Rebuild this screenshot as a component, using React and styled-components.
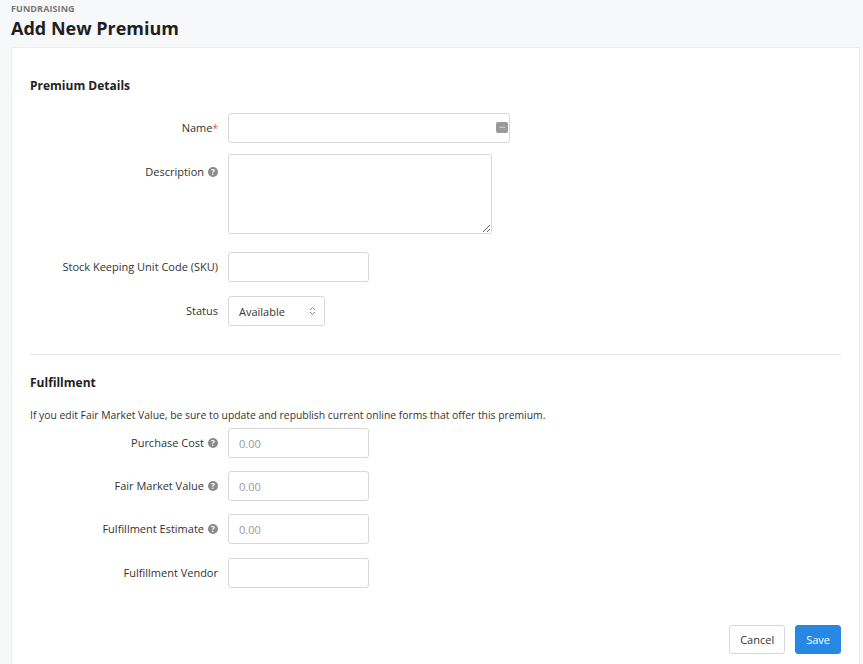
import React from "react";
import styled, { createGlobalStyle } from "styled-components";

const GlobalStyle = createGlobalStyle`
  body {
    margin: 0;
    background: #f7f8fa;
    font-family: "Open Sans", "Liberation Sans", sans-serif;
    color: #333;
  }
`;

const Page = styled.div`
  padding: 2px 0 0 11px;
  height: 662px;
  overflow: hidden;
`;

const Crumb = styled.div`
  font-size: 9px;
  font-weight: 700;
  color: #777;
  letter-spacing: 0.1px;
`;

const Title = styled.h1`
  margin: 0;
  font-size: 18px;
  line-height: 26px;
  font-weight: 700;
  color: #1f1f1f;
`;

const Card = styled.div`
  margin-top: 6px;
  margin-right: 3px;
  background: #fff;
  border: 1px solid #eceef1;
  padding: 29px 18px 20px 18px;
  min-height: 600px;
`;

const SectionTitle = styled.h2`
  margin: 0 0 ${(p) => p.$mb}px;
  font-size: 12px;
  font-weight: 700;
  color: #222;
`;

const Row = styled.div`
  display: flex;
  align-items: flex-start;
  margin-bottom: ${(p) => p.$mb}px;
`;

const Label = styled.label`
  width: 198px;
  padding-right: 10px;
  box-sizing: border-box;
  display: flex;
  justify-content: flex-end;
  align-items: center;
  gap: 4px;
  font-size: 11px;
  line-height: 14px;
  padding-top: ${(p) => p.$pt ?? 8}px;
  color: #333;
`;

const Req = styled.span`
  color: #d9534f;
  margin-left: -4px;
  align-self: flex-start;
  font-size: 10px;
`;

const Help = styled.span`
  display: inline-flex;
  width: 10px;
  height: 10px;
  border-radius: 50%;
  background: #8a8a8a;
  color: #fff;
  font-size: 8px;
  font-weight: 700;
  align-items: center;
  justify-content: center;
  line-height: 1;
`;

const Field = styled.div`
  position: relative;
`;

const Input = styled.input`
  width: ${(p) => p.$w}px;
  height: 30px;
  box-sizing: border-box;
  border: 1px solid #d6d8db;
  border-radius: 3px;
  padding: 0 10px;
  font-family: inherit;
  font-size: 11px;
  color: #333;
  outline: none;
  &::placeholder { color: #999; }
`;

const TextArea = styled.textarea`
  width: 264px;
  height: 80px;
  box-sizing: border-box;
  border: 1px solid #d6d8db;
  border-radius: 3px;
  font-family: inherit;
  display: block;
`;

const Dots = styled.span`
  position: absolute;
  right: 2px;
  top: 9px;
  width: 12px;
  height: 11px;
  border-radius: 2px;
  background: #9a9a9a;
  color: #fff;
  font-size: 9px;
  line-height: 6px;
  text-align: center;
  letter-spacing: -0.5px;
`;

const Select = styled.div`
  width: 97px;
  height: 30px;
  box-sizing: border-box;
  border: 1px solid #d6d8db;
  border-radius: 3px;
  display: flex;
  align-items: center;
  justify-content: space-between;
  padding: 0 8px 0 10px;
  font-size: 11px;
  color: #333;
`;

const Divider = styled.hr`
  border: none;
  border-top: 1px solid #e8e9eb;
  margin: 28px 0 19px;
`;

const Note = styled.p`
  margin: 0 0 6px;
  font-size: 10.35px;
  color: #333;
`;

const Actions = styled.div`
  display: flex;
  justify-content: flex-end;
  gap: 10px;
  margin-top: 37px;
`;

const Button = styled.button`
  height: 29px;
  padding: 0 ${(p) => (p.$primary ? 10 : 10)}px;
  border-radius: 3px;
  font-family: inherit;
  font-size: 11px;
  border: 1px solid ${(p) => (p.$primary ? "#2688e3" : "#d6d8db")};
  background: ${(p) => (p.$primary ? "#2688e3" : "#fff")};
  color: ${(p) => (p.$primary ? "#fff" : "#333")};
`;

const Chevrons = () => (
  <svg width="7" height="10" viewBox="0 0 7 10" fill="none" stroke="#888" strokeWidth="1">
    <path d="M1 4 L3.5 1.5 L6 4" />
    <path d="M1 6 L3.5 8.5 L6 6" />
  </svg>
);

const money = [
  ["Purchase Cost", true, 14],
  ["Fair Market Value", true, 14],
  ["Fulfillment Estimate", true, 15],
];

export default function App() {
  return (
    <>
      <GlobalStyle />
      <Page>
        <Crumb>FUNDRAISING</Crumb>
        <Title>Add New Premium</Title>
        <Card>
          <SectionTitle $mb={19}>Premium Details</SectionTitle>
          <Row $mb={11}>
            <Label>Name<Req>*</Req></Label>
            <Field>
              <Input $w={282} />
              <Dots>...</Dots>
            </Field>
          </Row>
          <Row $mb={18}>
            <Label $pt={11}>Description <Help>?</Help></Label>
            <TextArea />
          </Row>
          <Row $mb={14}>
            <Label>Stock Keeping Unit Code (SKU)</Label>
            <Input $w={141} />
          </Row>
          <Row $mb={0}>
            <Label>Status</Label>
            <Select>
              Available <Chevrons />
            </Select>
          </Row>
          <Divider />
          <SectionTitle $mb={17}>Fulfillment</SectionTitle>
          <Note>If you edit Fair Market Value, be sure to update and republish current online forms that offer this premium.</Note>
          {money.map(([label, help, mb]) => (
            <Row key={label} $mb={mb - 1}>
              <Label>{label} {help && <Help>?</Help>}</Label>
              <Input $w={141} placeholder="0.00" />
            </Row>
          ))}
          <Row $mb={0}>
            <Label>Fulfillment Vendor</Label>
            <Input $w={141} />
          </Row>
          <Actions>
            <Button>Cancel</Button>
            <Button $primary>Save</Button>
          </Actions>
        </Card>
      </Page>
    </>
  );
}
